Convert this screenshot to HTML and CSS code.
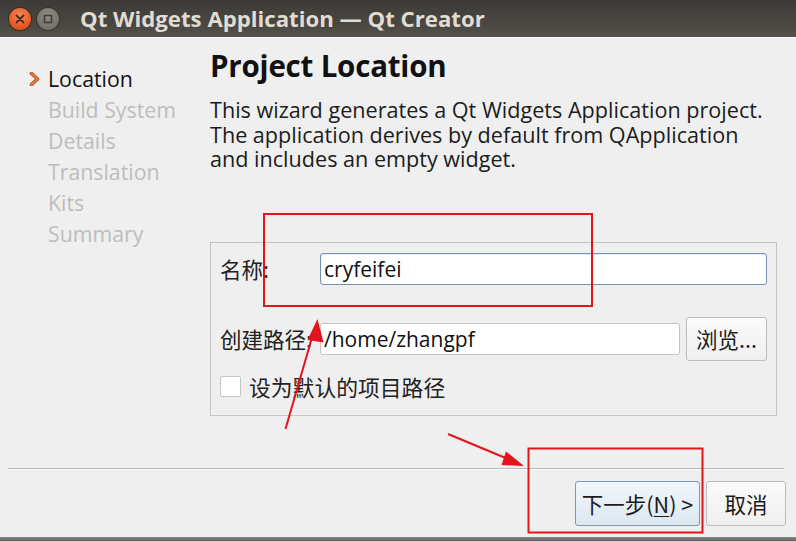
FILE: index.html
```html
<!DOCTYPE html>
<html lang="zh">
<head>
<meta charset="utf-8">
<title>Qt Widgets Application — Qt Creator</title>
<link rel="stylesheet" href="styles.css">
</head>
<body>
<div class="window">
  <div class="titlebar">
    <span class="wbtn close">
      <svg width="10" height="10" viewBox="0 0 10 10"><path d="M1.5 1.5L8.5 8.5M8.5 1.5L1.5 8.5" stroke="#4a2a1c" stroke-width="1.8" stroke-linecap="round"/></svg>
    </span>
    <span class="wbtn min">
      <svg width="10" height="10" viewBox="0 0 10 10"><rect x="1.5" y="1.5" width="7" height="7" fill="none" stroke="#3c3b37" stroke-width="1.5"/></svg>
    </span>
    <span class="title">Qt Widgets Application — Qt Creator</span>
  </div>

  <div class="main">
    <ul class="steps">
      <li class="current"><span class="lead"><svg width="12" height="14" viewBox="0 0 12 14"><path d="M2.5 1.5L8.5 7L2.5 12.5" fill="none" stroke="#b8501e" stroke-width="3.6" stroke-linecap="round" stroke-linejoin="round"/><path d="M2.5 1.5L8.5 7L2.5 12.5" fill="none" stroke="#ef8a4a" stroke-width="1.6" stroke-linecap="round" stroke-linejoin="round"/></svg></span>Location</li>
      <li><span class="lead"></span>Build System</li>
      <li><span class="lead"></span>Details</li>
      <li><span class="lead"></span>Translation</li>
      <li><span class="lead"></span>Kits</li>
      <li><span class="lead"></span>Summary</li>
    </ul>

    <div class="page">
      <h1 class="page-title">Project Location</h1>
      <div class="desc">
        <div class="desc-line">This wizard generates a Qt Widgets Application project.</div>
        <div class="desc-line">The application derives by default from QApplication</div>
        <div class="desc-line">and includes an empty widget.</div>
      </div>

      <div class="group">
        <div class="row row-name">
          <span class="label">名称:</span>
          <div class="field focused">cryfeifei</div>
        </div>
        <div class="row row-path">
          <span class="label">创建路径:</span>
          <div class="field">/home/zhangpf</div>
          <button class="btn browse">浏览...</button>
        </div>
        <div class="row row-check">
          <span class="checkbox"></span>
          <span class="check-label">设为默认的项目路径</span>
        </div>
      </div>
    </div>
  </div>

  <div class="footer">
    <div class="sep"></div>
    <div class="buttons">
      <button class="btn default">下一步(<u>N</u>) &gt;</button>
      <button class="btn cancel">取消</button>
    </div>
    <div class="edge"></div>
  </div>

  <svg class="annot" width="796" height="541" viewBox="0 0 796 541">
    <rect x="264" y="214" width="328" height="92" fill="none" stroke="#e3141c" stroke-width="2"/>
    <rect x="528.5" y="448.5" width="174" height="84" fill="none" stroke="#e3141c" stroke-width="2"/>
    <line x1="285.5" y1="429" x2="313" y2="334" stroke="#e3141c" stroke-width="2"/>
    <polygon points="317.5,319 307.5,340 323.5,342.5" fill="#e3141c"/>
    <line x1="448" y1="434" x2="508" y2="459" stroke="#e3141c" stroke-width="2"/>
    <polygon points="524,466 506,451.5 501.5,465" fill="#e3141c"/>
  </svg>
</div>
</body>
</html>
```

FILE: styles.css
```css
* {
  box-sizing: border-box;
}

html, body {
  margin: 0;
  padding: 0;
}

body {
  width: 796px;
  height: 541px;
  overflow: hidden;
  background: #efefef;
  font-family: "Open Sans", "Noto Sans CJK SC", sans-serif;
  color: #1c1c1c;
}

.window {
  position: relative;
  width: 796px;
  height: 541px;
  display: flex;
  flex-direction: column;
  background: #efefef;
}

/* title bar */
.titlebar {
  height: 38px;
  flex: none;
  display: flex;
  align-items: center;
  padding-left: 9px;
  background: linear-gradient(#3c3b37, #4a4843 70%, #55524b);
  border-bottom: 1px solid #f6f6f6;
}

.wbtn {
  width: 22px;
  height: 22px;
  border-radius: 50%;
  display: flex;
  align-items: center;
  justify-content: center;
  flex: none;
}

.wbtn.close {
  background: radial-gradient(circle at 50% 35%, #f48a5c, #e85a25 60%, #c9441a);
  box-shadow: 0 0 0 1px #3a2a22;
}

.wbtn.min {
  margin-left: 6px;
  background: radial-gradient(circle at 50% 35%, #8f8c86, #77746e 65%, #64615c);
  box-shadow: 0 0 0 1px #34332f;
}

.title {
  margin-left: 21px;
  font-weight: 700;
  font-size: 22.2px;
  color: #e0dcd3;
  white-space: nowrap;
}

/* main area */
.main {
  flex: 1;
  display: flex;
}

.steps {
  list-style: none;
  margin: 0;
  padding: 25px 0 0 0;
  width: 210px;
  flex: none;
}

.steps li {
  height: 31px;
  display: flex;
  align-items: center;
  font-size: 21.3px;
  color: #bdbdbd;
  white-space: nowrap;
}

.steps li.current {
  color: #111;
}

.lead {
  width: 48px;
  flex: none;
  display: flex;
  padding-left: 29px;
}

.page {
  flex: 1;
  padding-right: 19px;
}

.page-title {
  margin: 11px 0 0 0;
  font-size: 29.5px;
  line-height: 34px;
  font-weight: 700;
  color: #111;
  letter-spacing: -0.2px;
}

.desc {
  margin: 15px 0 0 0;
  font-size: 21.6px;
  color: #1c1c1c;
  white-space: nowrap;
}

.desc-line {
  height: 24.5px;
  line-height: 24.5px;
}

/* group box */
.group {
  margin-top: 70px;
  border: 1px solid #c4c4c4;
  padding: 10px 9px 18px 9px;
  display: flex;
  flex-direction: column;
}

.row {
  display: flex;
  align-items: center;
  font-size: 21px;
}

.row-name {
  height: 32px;
}

.row-path {
  height: 44px;
  margin-top: 32px;
}

.row-check {
  height: 21px;
  margin-top: 15px;
}

.label {
  width: 100px;
  flex: none;
  white-space: nowrap;
  font-family: "Noto Sans CJK SC", sans-serif;
  font-size: 21.5px;
  color: #222;
}

.field {
  flex: 1;
  height: 32px;
  background: #fff;
  border: 1px solid #c3c3c3;
  border-radius: 3px;
  padding-left: 3px;
  display: flex;
  align-items: center;
  font-size: 21px;
  color: #111;
}

.field.focused {
  border-color: #7392b4;
  box-shadow: inset 0 1px 0 #e4eef8, inset 1px 0 0 #edf3f9;
}

.btn {
  font-family: "Noto Sans CJK SC", sans-serif;
  font-size: 21.5px;
  color: #1c1c1c;
  background: linear-gradient(#fbfbfb, #efefef);
  border: 1px solid #bdbdbd;
  border-radius: 3px;
  padding: 0;
  display: flex;
  align-items: center;
  justify-content: center;
}

.browse {
  width: 81px;
  height: 44px;
  margin-left: 6px;
  flex: none;
}

.checkbox {
  width: 21px;
  height: 21px;
  background: #fff;
  border: 1px solid #c6c6c6;
  border-radius: 2px;
  flex: none;
}

.check-label {
  margin-left: 8px;
  font-family: "Noto Sans CJK SC", sans-serif;
  font-size: 21.8px;
  color: #222;
  white-space: nowrap;
}

/* footer */
.footer {
  flex: none;
  display: flex;
  flex-direction: column;
}

.sep {
  height: 2px;
  margin: 0 12px 0 8px;
  border-top: 1px solid #b9b9b9;
  border-bottom: 1px solid #fafafa;
}

.buttons {
  display: flex;
  justify-content: flex-end;
  gap: 6px;
  padding: 11px 10px 0 0;
  height: 67px;
}

.buttons .btn {
  height: 45px;
}

.btn.default {
  width: 125px;
  background: linear-gradient(#f1f6fb, #dce7f1);
  border-color: #7f97b0;
}

.btn.default u {
  text-decoration-thickness: 1px;
  text-underline-offset: 3px;
}

.btn.cancel {
  width: 80px;
}

.edge {
  height: 4px;
  background: linear-gradient(#8a8a8a, #5e5e5e);
}

/* annotation overlay */
.annot {
  position: absolute;
  left: 0;
  top: 0;
  pointer-events: none;
}
```
